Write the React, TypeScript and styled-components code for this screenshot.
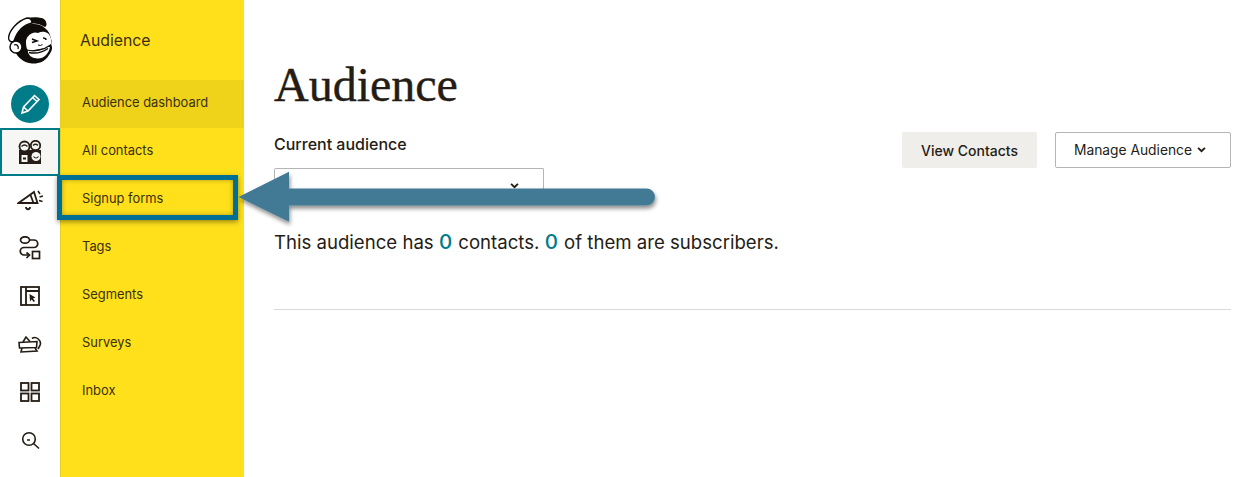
import React from 'react';
import styled, {createGlobalStyle} from 'styled-components';

const GlobalStyle = createGlobalStyle`
  html, body {
    margin: 0;
    padding: 0;
    background: #fff;
  }
  body {
    font-family: Inter, Roboto, "Liberation Sans", sans-serif;
    color: #241c15;
  }
`;

const MENU_ITEMS = ['Audience dashboard', 'All contacts', 'Signup forms', 'Tags', 'Segments', 'Surveys', 'Inbox'];

const Monkey = () => (
  <svg width="44" height="47" viewBox="0 0 44 47">
    <path d="M5 22C8 12 16 6 26 7c8 0 16 6 17 15 3 6 1 12-2 16-4 7-11 9-17 8.500C16 46 9 40 7 34z" fill="#0f0c09" />
    <path d="M19 1c7-1.500 16-1 18 2 2 3 2 6 0 7-5-3-9-4-13-3.500z" fill="#0f0c09" />
    <path d="M.5 21C1 14 9 4 19 1c3 0 5 2 5 5C15 8 9 15 6 24c-3 2-5 0-5.500-3z" fill="#fff" stroke="#0f0c09" strokeWidth="1.400" />
    <circle cx="8" cy="30" r="6" fill="#fff" stroke="#0f0c09" strokeWidth="1.500" />
    <path d="M6 28c3-1 5 1 4 4" stroke="#0f0c09" strokeWidth="1.300" fill="none" />
    <path d="M18 24c1-6 7-10 12-8 5-3 12-1 13 6 1 4 1 6 0 8l-23 4c-2-3-2-7-2-10z" fill="#fff" />
    <path d="M19 33c7 2 17 0 23.500-5 .5 7-5.500 15-13.500 14-6 0-10-4-10-9z" fill="#fff" stroke="#0f0c09" strokeWidth="1.200" />
    <path d="M21 35.500c7 1.500 14-.5 19-4" stroke="#0f0c09" strokeWidth="1.500" fill="none" />
    <path d="M24 22l5 2-5 1.500M35 21c2 0 3 1 3 2" stroke="#0f0c09" strokeWidth="1.500" fill="none" />
    <path d="M30 28l2.500 .5 2-1" stroke="#0f0c09" strokeWidth="1" fill="none" />
  </svg>
);

const Pencil = () => (
  <svg width="22" height="24" viewBox="0 0 22 24" fill="none" stroke="#fff" strokeWidth="1.600">
    <path d="M3 21l1.500-6L15.500 3.500l4.500 4L9 19z" />
    <path d="M13.500 5.500l4.500 4M4.500 15l4.500 4" />
  </svg>
);

const AudienceIcon = () => (
  <svg width="24" height="24" viewBox="0 0 24 24">
    <rect x="1" y="10" width="22" height="14" fill="#241c15" />
    <circle cx="6.500" cy="6.500" r="5" fill="#f6f6f4" stroke="#241c15" strokeWidth="1.800" />
    <circle cx="17.500" cy="5.500" r="4.700" fill="#f6f6f4" stroke="#241c15" strokeWidth="1.800" />
    <path d="M3.500 6.500c2-2 4-2 6 0M15 5.500c1.500-1.500 3.500-1.500 5 0" fill="none" stroke="#241c15" strokeWidth="1.300" />
    <rect x="3.500" y="15" width="6" height="7" fill="#f6f6f4" />
    <rect x="5" y="17.500" width="3" height="2" fill="#241c15" />
    <circle cx="18" cy="16.500" r="4.500" fill="#f6f6f4" />
    <path d="M15.500 16.500c1.500 2 3.500 2 5 0" fill="none" stroke="#241c15" strokeWidth="1.200" />
  </svg>
);

const CampaignIcon = () => (
  <svg width="26" height="24" viewBox="0 0 26 24" fill="none" stroke="#241c15" strokeWidth="1.800">
    <path d="M1.500 15L17 4l3.500 11z" />
    <path d="M13.500 7l3 8" />
    <path d="M9 19c0 3 4 3 4 0" />
    <path d="M21 3l2 3M22.500 9l3.500-1M22 12.500l3.500 1" strokeWidth="1.500" />
  </svg>
);

const AutomationIcon = () => (
  <svg width="22" height="24" viewBox="0 0 22 24" fill="none" stroke="#241c15" strokeWidth="1.700">
    <ellipse cx="6" cy="4" rx="4.500" ry="3.200" />
    <path d="M10.500 4h4.500a3.700 3.700 0 0 1 0 7.500H5a3.700 3.700 0 0 0 0 7.500h5" />
    <path d="M7.500 16.500L10.500 19 7.500 22" />
    <rect x="13.500" y="15.500" width="7" height="7" />
  </svg>
);

const WebsiteIcon = () => (
  <svg width="20" height="20" viewBox="0 0 20 20" fill="none" stroke="#241c15" strokeWidth="1.800">
    <rect x="1" y="1" width="18" height="18" />
    <path d="M6 1v18M6 5H19" />
    <path d="M9.500 8l6 3.500-2.500 1 2 2.500-1.300 1-2-2.500-1.700 2z" fill="#241c15" stroke="none" />
  </svg>
);

const TemplatesIcon = () => (
  <svg width="24" height="18" viewBox="0 0 24 18" fill="none" stroke="#241c15" strokeWidth="1.600">
    <path d="M1 7.500L19 6.500l-.5 6L1.500 13z" />
    <path d="M5 7l3-5 4 4.500" />
    <path d="M14 3.500c4-3 10 2 8 7l-2 3.500" />
    <path d="M4 13l-1 4 16-1-2-3" />
  </svg>
);

const GridIcon = () => (
  <svg width="20" height="20" viewBox="0 0 20 20" fill="none" stroke="#241c15" strokeWidth="1.800">
    <rect x="1" y="1" width="7.500" height="7.500" />
    <rect x="11.500" y="1" width="7.500" height="7.500" />
    <rect x="1" y="11.500" width="7.500" height="7.500" />
    <rect x="11.500" y="11.500" width="7.500" height="7.500" />
  </svg>
);

const SearchIcon = () => (
  <svg width="20" height="20" viewBox="0 0 20 20" fill="none" stroke="#241c15" strokeWidth="1.600">
    <circle cx="9" cy="9" r="6.300" />
    <path d="M13.500 13.500l5.500 5M7 10h3" />
  </svg>
);

const Chevron = () => (
  <svg width="9" height="6" viewBox="0 0 10 7" fill="none" stroke="#241c15" strokeWidth="2.200">
    <path d="M1 1l4 4 4-4" />
  </svg>
);

export default function App() {
  return (
    <Page>
      <GlobalStyle />
      <Rail>
        <LogoSlot><Monkey /></LogoSlot>
        <CreateButton><Pencil /></CreateButton>
        <RailItem $active><AudienceIcon /></RailItem>
        <RailItem><CampaignIcon /></RailItem>
        <RailItem><AutomationIcon /></RailItem>
        <RailItem><WebsiteIcon /></RailItem>
        <RailItem><TemplatesIcon /></RailItem>
        <RailItem><GridIcon /></RailItem>
        <RailItem><SearchIcon /></RailItem>
      </Rail>
      <Sidebar>
        <SidebarTitle>Audience</SidebarTitle>
        {MENU_ITEMS.map((item, i) => (
          <MenuItem key={item} $active={i === 0}>{item}</MenuItem>
        ))}
      </Sidebar>
      <Main>
        <Heading>Audience</Heading>
        <Toolbar>
          <Field>
            <FieldLabel>Current audience</FieldLabel>
            <SelectBox><SelectChevron><Chevron /></SelectChevron></SelectBox>
          </Field>
          <Buttons>
            <PrimaryButton>View Contacts</PrimaryButton>
            <OutlineButton>Manage Audience <Chevron /></OutlineButton>
          </Buttons>
        </Toolbar>
        <Summary>This audience has <Count>0</Count> contacts. <Count>0</Count> of them are subscribers.</Summary>
        <Divider />
      </Main>
      <Highlight />
      <Arrow width="430" height="70" viewBox="0 0 430 70">
        <defs>
          <filter id="arrowShadow" x="-5%" y="-20%" width="110%" height="150%">
            <feDropShadow dx="1" dy="3" stdDeviation="2" floodColor="#000" floodOpacity="0.45" />
          </filter>
        </defs>
        <path
          d="M0.500 26L51 0.700V17.500H408.500A8.500 8.500 0 0 1 408.500 34.500H51V50.700z"
          fill="#437a96"
          filter="url(#arrowShadow)"
        />
      </Arrow>
    </Page>
  );
}

const Page = styled.div`
  position: relative;
  display: flex;
  width: 1256px;
  height: 477px;
  overflow: hidden;
  background: #fff;
`;

const Rail = styled.nav`
  width: 60px;
  flex: none;
  display: flex;
  flex-direction: column;
  align-items: stretch;
`;

const LogoSlot = styled.div`
  height: 84px;
  box-sizing: border-box;
  padding-bottom: 3px;
  display: flex;
  align-items: center;
  justify-content: center;
`;

const CreateButton = styled.div`
  width: 38px;
  height: 38px;
  margin: 1px auto 5px;
  border-radius: 50%;
  background: #007c89;
  display: flex;
  align-items: center;
  justify-content: center;
`;

const RailItem = styled.div<{$active?: boolean}>`
  height: 48px;
  flex: none;
  box-sizing: border-box;
  display: flex;
  align-items: center;
  justify-content: center;
  ${p => p.$active && 'background: #f6f6f4; border: 2px solid #007c89;'}
`;

const Sidebar = styled.aside`
  width: 184px;
  flex: none;
  background: #ffe01b;
  border-left: 1px solid #e8cf20;
  box-sizing: border-box;
  color: #3a3010;
`;

const SidebarTitle = styled.div`
  height: 80px;
  padding-left: 19px;
  display: flex;
  align-items: center;
  font-size: 15.800px;
`;

const MenuItem = styled.div<{$active?: boolean}>`
  height: 48px;
  box-sizing: border-box;
  padding: 0 0 4px 21px;
  display: flex;
  align-items: center;
  font-size: 12.900px;
  background: ${p => (p.$active ? '#efd31a' : 'transparent')};
`;

const Main = styled.main`
  flex: 1;
  padding: 0 25px 0 30px;
`;

const Heading = styled.h1`
  margin: 58px 0 0;
  font-family: "Liberation Serif", serif;
  font-weight: 400;
  font-size: 48px;
  line-height: 54px;
  -webkit-text-stroke: 0.400px #241c15;
`;

const Toolbar = styled.div`
  display: flex;
  justify-content: space-between;
  align-items: flex-start;
  margin-top: 20px;
`;

const Field = styled.div`
  display: flex;
  flex-direction: column;
`;

const FieldLabel = styled.label`
  font-size: 16px;
  font-weight: 500;
  line-height: 25px;
`;

/* the lower edge sits behind the annotation arrow, only the top of the box shows */
const SelectBox = styled.div`
  position: relative;
  width: 270px;
  height: 24px;
  margin: 11px 0 16px;
  box-sizing: border-box;
  border: 1px solid #b5b5b5;
  border-bottom: 0;
  border-radius: 2px 2px 0 0;
`;

const SelectChevron = styled.span`
  position: absolute;
  right: 24px;
  top: 14px;
  display: flex;
`;

const Buttons = styled.div`
  display: flex;
  gap: 18px;
`;

const PrimaryButton = styled.div`
  width: 135px;
  height: 36px;
  background: #efeeea;
  border-radius: 2px;
  font-size: 14px;
  font-weight: 500;
  display: flex;
  align-items: center;
  justify-content: center;
`;

const OutlineButton = styled.div`
  width: 176px;
  height: 36px;
  box-sizing: border-box;
  padding-right: 6px;
  border: 1px solid #b5b5b5;
  border-radius: 2px;
  font-size: 13.800px;
  display: flex;
  align-items: center;
  justify-content: center;
  gap: 5px;
`;

const Summary = styled.p`
  margin: 20px 0 0;
  font-size: 18.600px;
  line-height: 28px;
`;

const Count = styled.span`
  color: #007c89;
  font-size: 20.500px;
  font-weight: 500;
  line-height: 1;
  margin-right: 1px;
`;

const Divider = styled.hr`
  margin: 53px 0 0;
  border: 0;
  border-top: 1px solid #d9d9d9;
`;

const Highlight = styled.div`
  position: absolute;
  left: 57px;
  top: 175px;
  width: 181px;
  height: 45px;
  box-sizing: border-box;
  border: 5px solid #006f94;
  box-shadow: 0 2px 5px rgba(0, 0, 0, 0.4), inset 0 0 5px rgba(0, 0, 0, 0.3);
`;

const Arrow = styled.svg`
  position: absolute;
  left: 238px;
  top: 171px;
`;
